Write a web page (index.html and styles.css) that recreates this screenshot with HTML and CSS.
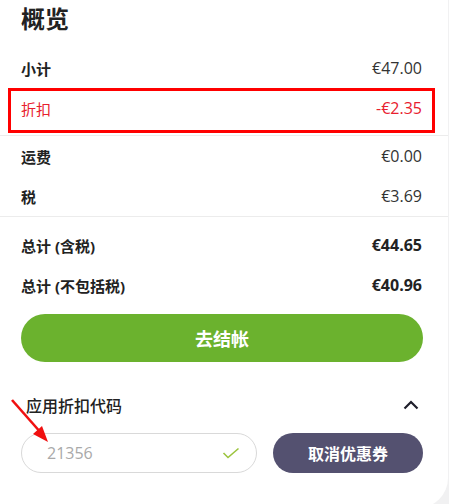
FILE: index.html
```html
<!DOCTYPE html>
<html lang="zh">
<head>
<meta charset="utf-8">
<link rel="stylesheet" href="styles.css">
</head>
<body>
<div class="card">
  <h1 class="title">概览</h1>
  <div class="group group-first">
    <div class="row"><span class="label">小计</span><span class="value">€47.00</span></div>
    <div class="row row-discount"><span class="label">折扣</span><span class="value">-€2.35</span></div>
  </div>
  <div class="group">
    <div class="row"><span class="label">运费</span><span class="value">€0.00</span></div>
    <div class="row"><span class="label">税</span><span class="value">€3.69</span></div>
  </div>
  <div class="group group-total">
    <div class="row"><span class="label">总计 (含税)</span><span class="value strong">€44.65</span></div>
    <div class="row"><span class="label">总计 (不包括税)</span><span class="value strong">€40.96</span></div>
  </div>
  <button class="checkout">去结帐</button>
  <div class="coupon-head">
    <span>应用折扣代码</span>
    <svg class="chevron" width="16" height="10" viewBox="0 0 16 10"><path d="M1.5 8.5 L8 2 L14.5 8.5" fill="none" stroke="#1f1f2b" stroke-width="2.2"/></svg>
  </div>
  <div class="coupon-row">
    <div class="coupon-input">
      <span class="code">21356</span>
      <svg class="check" width="18" height="12" viewBox="0 0 18 12"><path d="M1.5 6 L6 10.5 L16.5 1.5" fill="none" stroke="#9cc43e" stroke-width="1.6"/></svg>
    </div>
    <button class="cancel">取消优惠券</button>
  </div>
  <svg class="arrow" width="60" height="60" viewBox="0 0 60 60"><line x1="12" y1="10" x2="42" y2="44" stroke="#f01010" stroke-width="2.6"/><polygon points="48,52 33,44 42,36" fill="#f01010"/></svg>
</div>
</body>
</html>
```
FILE: styles.css
```css
html, body {
  margin: 0;
  padding: 0;
  overflow: hidden;
}
body {
  background: #f1f1f2;
  font-family: "Open Sans", "Noto Sans CJK SC", sans-serif;
  color: #222;
}
.card {
  position: relative;
  width: 448px;
  height: 508px;
  background: #fff;
  border-bottom-right-radius: 30px;
  box-sizing: border-box;
}
.title {
  margin: 0;
  padding: 0 21px;
  height: 48px;
  line-height: 38px;
  font-size: 24px;
  font-weight: 700;
  color: #222;
}
.group {
  padding: 0 26px 0 21px;
  border-bottom: 1px solid #ececec;
}
.group-first {
  padding-bottom: 7px;
}
.group-total {
  border-bottom: none;
  padding-top: 8px;
}
.row {
  position: relative;
  display: flex;
  justify-content: space-between;
  align-items: center;
  height: 40px;
  font-size: 15px;
}
.label {
  font-weight: 700;
  color: #222;
}
.value {
  font-size: 16px;
  color: #333;
}
.value.strong {
  font-weight: 700;
  color: #222;
}
.row-discount .label,
.row-discount .value {
  color: #e8202e;
  font-weight: 400;
}
.row-discount::after {
  content: "";
  position: absolute;
  left: -13px;
  right: -13px;
  top: 0;
  bottom: -5px;
  border: 3px solid #ff0000;
}
.checkout {
  display: block;
  margin: 9px 21px 0;
  width: 402px;
  height: 48px;
  border: none;
  border-radius: 24px;
  background: #6bb22e;
  color: #fff;
  font-family: "Open Sans", "Noto Sans CJK SC", sans-serif;
  font-size: 18px;
  font-weight: 700;
}
.coupon-head {
  display: flex;
  justify-content: space-between;
  align-items: center;
  height: 40px;
  margin-top: 23px;
  padding: 0 29px 0 26px;
  font-size: 16px;
  font-weight: 500;
  color: #222;
}
.coupon-row {
  display: flex;
  gap: 16px;
  margin-top: 8px;
  padding: 0 21px;
}
.coupon-input {
  box-sizing: border-box;
  width: 236px;
  height: 40px;
  border: 1px solid #d9d9d9;
  border-radius: 20px;
  display: flex;
  align-items: center;
  justify-content: space-between;
  padding: 0 16px 0 25px;
}
.code {
  font-size: 16px;
  color: #a9a9a9;
}
.cancel {
  width: 150px;
  height: 40px;
  border: none;
  border-radius: 20px;
  background: #545170;
  color: #fff;
  font-family: "Open Sans", "Noto Sans CJK SC", sans-serif;
  font-size: 16px;
  font-weight: 700;
}
.arrow {
  position: absolute;
  left: 0;
  top: 390px;
}
```
